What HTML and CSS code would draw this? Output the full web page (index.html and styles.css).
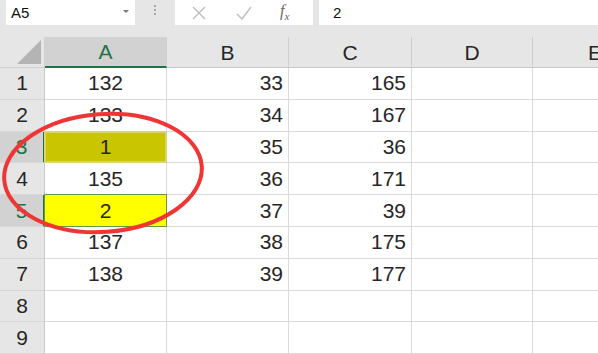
FILE: index.html
```html
<!DOCTYPE html>
<html lang="en">
<head>
    <meta charset="UTF-8">
    <title>Sheet</title>
    <link rel="stylesheet" href="styles.css">
</head>
<body>
    <div class="toolbar">
        <div class="name-box">
            <span>A5</span>
            <span class="drop"></span>
        </div>
        <div class="grip"><i></i><i></i><i></i></div>
        <div class="fx-buttons">
            <svg class="btn-x" width="16" height="16" viewBox="0 0 16 16"><path d="M2 2 L14 14 M14 2 L2 14" stroke="#bdbdbd" stroke-width="1.4" fill="none"/></svg>
            <svg class="btn-ok" width="18" height="16" viewBox="0 0 18 16"><path d="M2 9 L7 14 L16 2" stroke="#bdbdbd" stroke-width="1.4" fill="none"/></svg>
            <span class="fx">f<sub>x</sub></span>
        </div>
        <div class="formula">2</div>
    </div>

    <div class="sheet">
        <div class="corner"><span class="tri"></span></div>
        <div class="col-head active">A</div>
        <div class="col-head">B</div>
        <div class="col-head">C</div>
        <div class="col-head">D</div>
        <div class="col-head last">E</div>

        <div class="row-head">1</div><div class="cell mid">132</div><div class="cell num">33</div><div class="cell num">165</div><div class="cell"></div><div class="cell last"></div>
        <div class="row-head">2</div><div class="cell mid">133</div><div class="cell num">34</div><div class="cell num">167</div><div class="cell"></div><div class="cell last"></div>
        <div class="row-head sel">3</div><div class="cell mid olive">1</div><div class="cell num">35</div><div class="cell num">36</div><div class="cell"></div><div class="cell last"></div>
        <div class="row-head">4</div><div class="cell mid">135</div><div class="cell num">36</div><div class="cell num">171</div><div class="cell"></div><div class="cell last"></div>
        <div class="row-head sel">5</div><div class="cell mid yellow">2</div><div class="cell num">37</div><div class="cell num">39</div><div class="cell"></div><div class="cell last"></div>
        <div class="row-head">6</div><div class="cell mid">137</div><div class="cell num">38</div><div class="cell num">175</div><div class="cell"></div><div class="cell last"></div>
        <div class="row-head">7</div><div class="cell mid">138</div><div class="cell num">39</div><div class="cell num">177</div><div class="cell"></div><div class="cell last"></div>
        <div class="row-head">8</div><div class="cell"></div><div class="cell"></div><div class="cell"></div><div class="cell"></div><div class="cell last"></div>
        <div class="row-head">9</div><div class="cell"></div><div class="cell"></div><div class="cell"></div><div class="cell"></div><div class="cell last"></div>
    </div>

    <!-- red hand-drawn ring over rows 2-5 -->
    <svg class="ring" width="210" height="130" viewBox="0 0 210 130">
        <ellipse cx="103" cy="63" rx="99" ry="59" transform="rotate(-4 103 63)" fill="none" stroke="#ef3535" stroke-width="4"/>
    </svg>
</body>
</html>
```

FILE: styles.css
```css
body {
    margin: 0;
    width: 598px;
    height: 354px;
    overflow: hidden;
    background-color: #e6e6e6;
    font-family: "Liberation Sans", Arial, sans-serif;
    color: #222;
    position: relative;
}

.toolbar {
    display: flex;
    height: 25px;
    padding-bottom: 12px;
}

.name-box {
    width: 129px;
    margin-left: 6px;
    background-color: white;
    display: flex;
    align-items: center;
    justify-content: space-between;
    padding: 0 6px 0 5px;
    box-sizing: border-box;
    font-size: 15px;
    color: #111;
}

.drop {
    width: 0;
    height: 0;
    border-left: 3px solid transparent;
    border-right: 3px solid transparent;
    border-top: 3px solid #777;
    margin-top: -2px;
}

.grip {
    width: 40px;
    display: flex;
    flex-direction: column;
    align-items: center;
    justify-content: center;
    gap: 2px;
    padding-bottom: 6px;
}

.grip i {
    width: 2px;
    height: 2px;
    background-color: #a8a8a8;
}

.fx-buttons {
    width: 138px;
    background-color: white;
    display: flex;
    align-items: center;
    padding-left: 16px;
    box-sizing: border-box;
}

.btn-x {
    margin-right: 28px;
}

.btn-ok {
    margin-right: 27px;
}

.fx {
    font-family: "Liberation Serif", serif;
    font-style: italic;
    font-size: 16px;
    color: #666;
}

.fx sub {
    font-size: 11px;
}

.formula {
    flex: 1;
    margin-left: 6px;
    background-color: white;
    font-size: 15px;
    padding-left: 14px;
    display: flex;
    align-items: center;
    color: #111;
}

.sheet {
    display: grid;
    grid-template-columns: 45px 122px 122px 123px 121px 1fr;
    grid-template-rows: 31px repeat(9, 31.8px);
    background-color: white;
}

.corner {
    background-color: #e6e6e6;
    border-right: 1px solid #d0d0d0;
    border-bottom: 1px solid #d0d0d0;
    position: relative;
}

.tri {
    position: absolute;
    right: 3px;
    bottom: 3px;
    width: 0;
    height: 0;
    border-left: 24px solid transparent;
    border-bottom: 24px solid #b4b4b4;
}

.col-head {
    background-color: #e6e6e6;
    border-right: 1px solid #cfcfcf;
    border-bottom: 1px solid #c8c8c8;
    display: flex;
    align-items: flex-end;
    justify-content: center;
    padding-bottom: 2px;
    font-size: 21px;
    color: #262626;
    box-sizing: border-box;
}

.col-head.active {
    background-color: #d2d2d2;
    color: #217346;
    border-bottom: 2px solid #217346;
}

.col-head.last {
    justify-content: flex-start;
    padding-left: 55px;
    border-right: none;
}

.row-head {
    background-color: #e6e6e6;
    border-right: 1px solid #c8c8c8;
    border-bottom: 1px solid #d6d6d6;
    display: flex;
    align-items: center;
    justify-content: center;
    font-size: 21px;
    color: #262626;
    box-sizing: border-box;
}

.row-head.sel {
    background-color: #d2d2d2;
    color: #217346;
    border-right: 2px solid #217346;
}

.cell {
    border-right: 1px solid #dadada;
    border-bottom: 1px solid #dadada;
    display: flex;
    align-items: center;
    font-size: 21px;
    color: #262626;
    box-sizing: border-box;
}

.cell.last {
    border-right: none;
}

.mid {
    justify-content: center;
}

.num {
    justify-content: flex-end;
    padding-right: 5px;
}

.olive {
    background-color: #c9c500;
    border: 2px solid #d8d56c;
    margin: -1px 0 0 -1px;
}

.yellow {
    background-color: #ffff00;
    border: 1px solid #5f9a4f;
    margin: -1px 0 0 -1px;
}

.ring {
    position: absolute;
    left: 0;
    top: 110px;
}
```
